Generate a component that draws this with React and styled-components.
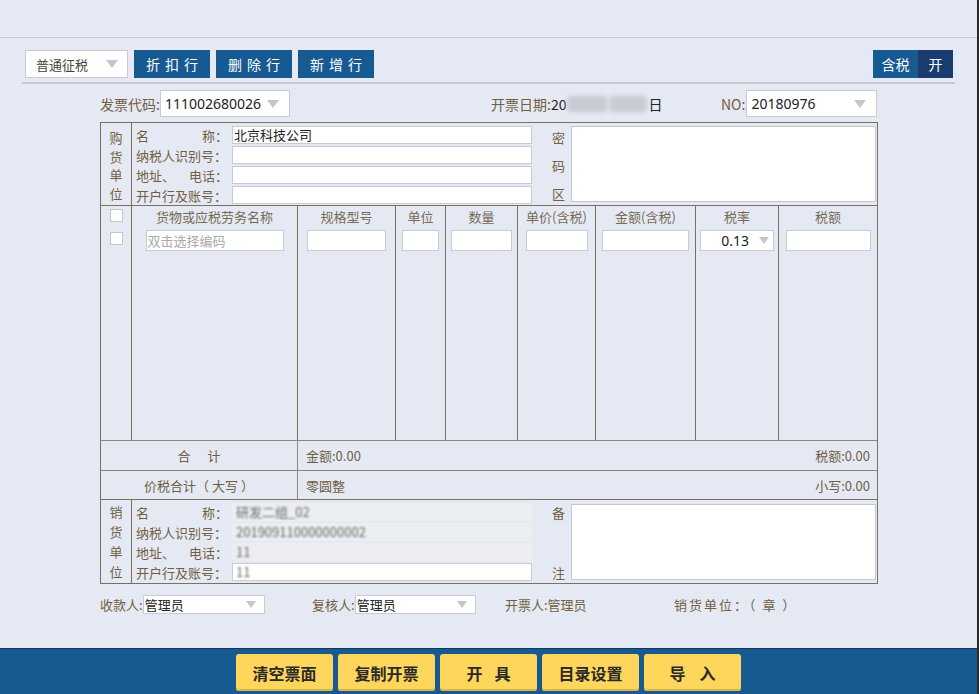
import React from 'react';
import styled, { createGlobalStyle } from 'styled-components';

const Global = createGlobalStyle`
  html, body { margin: 0; padding: 0; }
  body {
    background: #e5e9f3;
    font-family: "Noto Sans CJK SC", "Noto Sans", sans-serif;
    font-size: 13px;
    color: #725f42;
  }
  * { box-sizing: border-box; }
`;

const Page = styled.div`
  width: 979px;
  height: 694px;
  display: flex;
  flex-direction: column;
  background: #e5e9f3;
  border-right: 2px solid #2c2c2c;
  overflow: hidden;
`;

const TopStrip = styled.div`
  height: 38px;
  flex-shrink: 0;
  border-bottom: 1px solid #c6c9d0;
`;

const Main = styled.div`
  flex: 1;
  display: flex;
  flex-direction: column;
`;

const Toolbar = styled.div`
  margin-left: 22px;
  width: 933px;
  padding: 12px 2px 4px 3px;
  display: flex;
  align-items: center;
  gap: 6px;
  border-bottom: 2px solid #c6c9d0;
`;

const Arrow = styled.span`
  width: 0;
  height: 0;
  border-left: 6px solid transparent;
  border-right: 6px solid transparent;
  border-top: 8px solid #c4c6cb;
  flex-shrink: 0;
`;

const SmallArrow = styled(Arrow)`
  border-left-width: 5px;
  border-right-width: 5px;
  border-top-width: 7px;
`;

const Select = styled.div`
  width: ${p => p.$w}px;
  height: ${p => p.$h}px;
  margin-left: ${p => p.$ml || 0}px;
  background: #fff;
  border: 1px solid #c9cbd0;
  display: flex;
  align-items: center;
  justify-content: space-between;
  padding: 0 ${p => p.$pr || 10}px 0 ${p => p.$pl || 10}px;
  color: ${p => p.$color || '#222'};
  font-size: ${p => p.$fs || 13}px;
  font-family: ${p => p.$num ? '"Noto Sans", "Noto Sans CJK SC", sans-serif' : '"Noto Sans CJK SC", sans-serif'};
  flex-shrink: 0;
`;

const ToolButton = styled.button`
  width: 76px;
  height: 28px;
  border: none;
  background: #175a92;
  color: #fff;
  font-family: "Noto Sans CJK SC", sans-serif;
  font-size: 14px;
  letter-spacing: 5px;
  padding: 0 0 0 5px;
  cursor: pointer;
`;

const Toggle = styled.div`
  margin-left: auto;
  display: flex;
  height: 28px;
`;

const ToggleHalf = styled.div`
  width: ${p => p.$w}px;
  background: ${p => p.$dark ? '#1a3c6f' : '#175a92'};
  color: #fff;
  font-size: 14px;
  display: flex;
  align-items: center;
  justify-content: center;
`;

const InfoRow = styled.div`
  margin: 6px 0 0 100px;
  width: 778px;
  height: 27px;
  display: flex;
  align-items: center;
`;

const InfoGroup = styled.div`
  width: ${p => p.$w ? `${p.$w}px` : 'auto'};
  flex: ${p => p.$w ? 'none' : 1};
  display: flex;
  align-items: center;
  font-size: 14px;
`;

const Blur = styled.span`
  display: inline-block;
  width: ${p => p.$w}px;
  height: 16px;
  background: #c7cbd3;
  border-radius: 4px;
  filter: blur(2px);
  margin: 0 1px;
`;

const Dark = styled.span`
  color: #222;
`;

const Table = styled.div`
  margin: 5px 0 0 100px;
  width: 778px;
  border: 1px solid #7b7162;
  display: flex;
  flex-direction: column;
`;

const Party = styled.div`
  height: ${p => p.$h}px;
  display: grid;
  grid-template-columns: 31px 414px 25px 305px 1fr;
  border-top: ${p => p.$top ? '1px solid #7b7162' : 'none'};
`;

const SideLabel = styled.div`
  border-right: 1px solid #7b7162;
  display: flex;
  flex-direction: column;
  align-items: center;
  justify-content: space-between;
  padding: ${p => p.$pad};
  font-size: 13px;
  line-height: 15px;
`;

const Fields = styled.div`
  padding: 3px 14px 0 4px;
  display: flex;
  flex-direction: column;
  gap: 2px;
`;

const FieldRow = styled.div`
  display: flex;
  align-items: center;
  height: 18px;
`;

const FieldLabel = styled.div`
  width: 96px;
  padding-right: 4px;
  display: flex;
  justify-content: space-between;
  white-space: nowrap;
  font-size: 13px;
`;

const FieldInput = styled.div`
  flex: 1;
  height: 18px;
  background: ${p => p.$gray ? '#eceef1' : '#fff'};
  border: 1px solid ${p => p.$gray ? '#eceef1' : '#c9cbd0'};
  color: #222;
  font-size: 13px;
  line-height: 16px;
  padding-left: 1px;
  white-space: nowrap;
  overflow: hidden;
`;

const Fuzzy = styled.span`
  color: #6a6a6a;
  filter: blur(1.3px);
  display: inline-block;
  padding-left: 2px;
`;

const CodeLabel = styled.div`
  display: flex;
  flex-direction: column;
  align-items: center;
  justify-content: space-between;
  padding: ${p => p.$pad};
  font-size: 13px;
  line-height: 15px;
`;

const WhiteBox = styled.div`
  margin: ${p => p.$m};
  background: #fff;
  border: 1px solid #c4c7cd;
`;

const Goods = styled.div`
  height: 235px;
  border-top: 1px solid #7b7162;
  display: grid;
  grid-template-columns: 31px 166px 98px 50px 72px 78px 100px 83px 1fr;
`;

const GoodsCol = styled.div`
  border-right: ${p => p.$last ? 'none' : '1px solid #7b7162'};
  display: flex;
  flex-direction: column;
  align-items: center;
  padding-top: ${p => p.$pt || 1}px;
  gap: ${p => p.$gap || 3}px;
`;

const ColHead = styled.div`
  height: 20px;
  line-height: 20px;
  font-size: 13px;
  color: #786a56;
  white-space: nowrap;
`;

const CellInput = styled.div`
  width: ${p => p.$w}px;
  height: 21px;
  background: #fff;
  border: 1px solid #c9cbd0;
  font-size: 13px;
  line-height: 19px;
  color: #a9a9a9;
  padding-left: 1px;
  white-space: nowrap;
`;

const CellSelect = styled.div`
  width: ${p => p.$w}px;
  height: 21px;
  background: #fff;
  border: 1px solid #c9cbd0;
  display: flex;
  align-items: center;
  justify-content: flex-end;
  gap: 10px;
  padding-right: 4px;
  font-family: "Noto Sans", sans-serif;
  font-size: 14px;
  color: #222;
`;

const Check = styled.div`
  width: 13px;
  height: 13px;
  background: #fff;
  border: 1px solid #c4c6cb;
`;

const SumRow = styled.div`
  height: ${p => p.$h}px;
  border-top: 1px solid #8d867b;
  display: grid;
  grid-template-columns: 197px 1fr;
`;

const SumLabel = styled.div`
  border-right: 1px solid #8d867b;
  display: flex;
  align-items: center;
  justify-content: center;
  gap: ${p => p.$gap || 0}px;
  font-size: 13px;
  color: #6e5e47;
  white-space: pre;
`;

const SumValues = styled.div`
  display: flex;
  align-items: center;
  justify-content: space-between;
  padding: 0 7px 0 8px;
  font-size: 13px;
  color: #6e5e47;
`;

const Footer = styled.div`
  margin: 11px 0 0 100px;
  width: 778px;
  height: 19px;
  display: flex;
  align-items: center;
`;

const FooterGroup = styled.div`
  width: ${p => p.$w ? `${p.$w}px` : 'auto'};
  flex: ${p => p.$w ? 'none' : 1};
  display: flex;
  align-items: center;
  font-size: 13px;
  color: #725f42;
  white-space: nowrap;
  letter-spacing: ${p => p.$ls || 0}px;
`;

const BottomBar = styled.div`
  height: 46px;
  flex-shrink: 0;
  background: #175a92;
  border-top: 1px solid #15365e;
  display: flex;
  gap: 5px;
  padding: 5px 0 0 236px;
`;

const BigButton = styled.button`
  width: 97px;
  height: 37px;
  border: none;
  border-radius: 3px;
  background: #fed65b;
  box-shadow: inset 0 -2px 0 #dbb54a;
  font-family: "Noto Sans CJK SC", sans-serif;
  font-size: 16px;
  font-weight: 700;
  color: #2a2a2a;
  letter-spacing: ${p => p.$ls || 0}px;
  padding: 0 0 0 ${p => p.$ls || 0}px;
  cursor: pointer;
`;

const buyerFields = [
  { l: ['名', '称：'], v: '北京科技公司' },
  { l: ['纳税人识别号：'], v: '' },
  { l: ['地址、', '电话：'], v: '' },
  { l: ['开户行及账号：'], v: '' },
];

const sellerFields = [
  { l: ['名', '称：'], v: '研发二组_02', gray: true },
  { l: ['纳税人识别号：'], v: '201909110000000002', gray: true },
  { l: ['地址、', '电话：'], v: '11', gray: true },
  { l: ['开户行及账号：'], v: '11', gray: false },
];

const goodsCols = [
  { h: '货物或应税劳务名称', w: 138, ph: '双击选择编码' },
  { h: '规格型号', w: 79 },
  { h: '单位', w: 37 },
  { h: '数量', w: 61 },
  { h: '单价(含税)', w: 62 },
  { h: '金额(含税)', w: 87 },
  { h: '税率', w: 74, select: '0.13' },
  { h: '税额', w: 85 },
];

function FieldList({ items }) {
  return (
    <Fields>
      {items.map((f, i) => (
        <FieldRow key={i}>
          <FieldLabel>
            {f.l.map((s, j) => <span key={j}>{s}</span>)}
          </FieldLabel>
          <FieldInput $gray={f.gray}>
            {f.gray !== undefined && f.v ? <Fuzzy>{f.v}</Fuzzy> : f.v}
          </FieldInput>
        </FieldRow>
      ))}
    </Fields>
  );
}

export default function App() {
  return (
    <>
      <Global />
      <Page>
        <TopStrip />
        <Main>
          <Toolbar>
            <Select $w={103} $h={28} $color="#444" $pl={10} $pr={9}>
              普通征税<Arrow />
            </Select>
            <ToolButton>折扣行</ToolButton>
            <ToolButton>删除行</ToolButton>
            <ToolButton>新增行</ToolButton>
            <Toggle>
              <ToggleHalf $w={45}>含税</ToggleHalf>
              <ToggleHalf $w={35} $dark>开</ToggleHalf>
            </Toggle>
          </Toolbar>

          <InfoRow>
            <InfoGroup $w={391}>
              发票代码:
              <Select $w={130} $h={27} $fs={14} $num $pl={4} $pr={10}>
                111002680026<Arrow />
              </Select>
            </InfoGroup>
            <InfoGroup $w={230}>
              开票日期:<Dark>20</Dark><Blur $w={40} /><Blur $w={38} /><Dark>日</Dark>
            </InfoGroup>
            <InfoGroup>
              NO:
              <Select $w={131} $h={27} $fs={14} $num $pl={4} $pr={10} $ml={1}>
                20180976<Arrow />
              </Select>
            </InfoGroup>
          </InfoRow>

          <Table>
            <Party $h={82}>
              <SideLabel $pad="7px 0 4px">
                <span>购</span><span>货</span><span>单</span><span>位</span>
              </SideLabel>
              <FieldList items={buyerFields} />
              <CodeLabel $pad="7px 0 4px">
                <span>密</span><span>码</span><span>区</span>
              </CodeLabel>
              <WhiteBox $m="3px 0 3px 0" />
              <div />
            </Party>

            <Goods>
              <GoodsCol $pt={3} $gap={10}>
                <Check />
                <Check />
              </GoodsCol>
              {goodsCols.map((c, i) => (
                <GoodsCol key={i} $last={i === goodsCols.length - 1}>
                  <ColHead>{c.h}</ColHead>
                  {c.select ? (
                    <CellSelect $w={c.w}>{c.select}<SmallArrow /></CellSelect>
                  ) : (
                    <CellInput $w={c.w}>{c.ph || ''}</CellInput>
                  )}
                </GoodsCol>
              ))}
            </Goods>

            <SumRow $h={30}>
              <SumLabel $gap={17}>
                <span>合</span><span>计</span>
              </SumLabel>
              <SumValues>
                <span>金额:0.00</span>
                <span>税额:0.00</span>
              </SumValues>
            </SumRow>
            <SumRow $h={29}>
              <SumLabel>价税合计（ 大写 ）</SumLabel>
              <SumValues>
                <span>零圆整</span>
                <span>小写:0.00</span>
              </SumValues>
            </SumRow>

            <Party $h={84} $top>
              <SideLabel $pad="4px 0 4px">
                <span>销</span><span>货</span><span>单</span><span>位</span>
              </SideLabel>
              <FieldList items={sellerFields} />
              <CodeLabel $pad="5px 0 3px">
                <span>备</span><span>注</span>
              </CodeLabel>
              <WhiteBox $m="4px 0 3px 0" />
              <div />
            </Party>
          </Table>

          <Footer>
            <FooterGroup $w={212}>
              收款人:
              <Select $w={122} $h={19} $pl={1} $pr={8}>
                管理员<SmallArrow />
              </Select>
            </FooterGroup>
            <FooterGroup $w={193}>
              复核人:
              <Select $w={121} $h={19} $pl={1} $pr={8}>
                管理员<SmallArrow />
              </Select>
            </FooterGroup>
            <FooterGroup $w={169}>开票人:管理员</FooterGroup>
            <FooterGroup $ls={2}>销货单位：（ 章 ）</FooterGroup>
          </Footer>
        </Main>

        <BottomBar>
          <BigButton>清空票面</BigButton>
          <BigButton>复制开票</BigButton>
          <BigButton $ls={12}>开具</BigButton>
          <BigButton>目录设置</BigButton>
          <BigButton $ls={14}>导入</BigButton>
        </BottomBar>
      </Page>
    </>
  );
}
